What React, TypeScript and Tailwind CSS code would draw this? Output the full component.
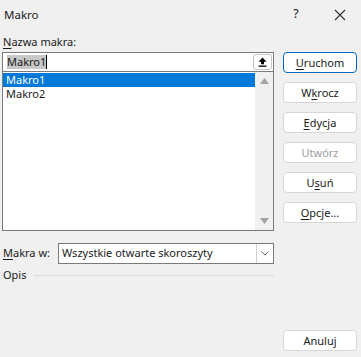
import React from "react";

const Btn = ({
  children,
  primary,
  disabled,
}: {
  children: React.ReactNode;
  primary?: boolean;
  disabled?: boolean;
}) => (
  <div
    className={
      "h-[21px] w-[74px] rounded-[4px] bg-white flex items-center justify-center text-[11px] leading-none " +
      (primary
        ? "border border-[#0067c0] text-[#1a1a1a]"
        : "border border-[#d6d6d6] " + (disabled ? "text-[#9d9d9d]" : "text-[#1a1a1a]"))
    }
  >
    {children}
  </div>
);

export default function App() {
  return (
    <div
      className="w-[361px] h-[357px] bg-[#f0f0f0] flex flex-col text-[#1a1a1a] overflow-hidden"
      style={{ fontFamily: '"Noto Sans", "Open Sans", sans-serif' }}
    >
      {/* title bar */}
      <div className="h-[29px] flex items-center pl-[4px] text-[11.5px] shrink-0">
        <span className="flex-1">Makro</span>
        <span className="w-[14px] text-center mr-[31px] text-[12.5px]">?</span>
        <svg width="12" height="12" viewBox="0 0 12 12" className="mr-[15px]">
          <path d="M1 1 L11 11 M11 1 L1 11" stroke="#333" strokeWidth="1.1" fill="none" />
        </svg>
      </div>

      <div className="flex flex-row flex-1 pl-[2px]">
        {/* left column */}
        <div className="w-[272px] flex flex-col">
          <div className="h-[23px] text-[11px] leading-[14px] pl-[1px] pt-[6px]">
            <span className="underline underline-offset-2">N</span>azwa makra:
          </div>
          <div className="h-[20px] bg-white border border-[#7a7a7a] flex items-center pl-[4px] pr-[1px]">
            <span className="text-[11px] leading-[14px] bg-[#c8c8c8]">Makro1</span>
            <span className="w-[1px] h-[14px] bg-black" />
            <div className="flex-1" />
            <div className="w-[19px] h-[16px] border border-[#c4c4c4] rounded-[3px] flex items-center justify-center">
              <svg width="9" height="10" viewBox="0 0 9 10">
                <path d="M4.5 0.5 L8.5 4.8 L6 4.8 L6 7.3 L3 7.3 L3 4.8 L0.5 4.8 Z" fill="#000" />
                <rect x="0.5" y="8.5" width="8" height="1.3" fill="#000" />
              </svg>
            </div>
          </div>
          <div className="h-[160px] bg-white border border-[#7a7a7a] -mt-[1px] flex flex-row">
            <div className="flex-1 pt-[1px] text-[11px] leading-[14px]">
              <div className="bg-[#0078d7] text-white pl-[3px] h-[14px]">Makro1</div>
              <div className="pl-[3px] h-[14px]">Makro2</div>
            </div>
            <div className="w-[18px] bg-[#f0f0f0] flex flex-col items-center justify-between py-[6px]">
              <svg width="9" height="6" viewBox="0 0 9 6">
                <path d="M0 6 L4.5 0 L9 6 Z" fill="#a3a3a3" />
              </svg>
              <svg width="9" height="6" viewBox="0 0 9 6">
                <path d="M0 0 L4.5 6 L9 0 Z" fill="#a3a3a3" />
              </svg>
            </div>
          </div>

          <div className="mt-[12px] flex flex-row items-center h-[21px]">
            <div className="w-[56px] pl-[1px] text-[11px]">
              <span className="underline underline-offset-2">M</span>akra w:
            </div>
            <div className="flex-1 h-[21px] bg-white border border-[#7a7a7a] flex items-center pl-[3px]">
              <span className="flex-1 text-[11px]">Wszystkie otwarte skoroszyty</span>
              <div className="w-[17px] h-[19px] border-l border-[#d0d0d0] flex items-center justify-center">
                <svg width="8" height="5" viewBox="0 0 8 5">
                  <path d="M0.5 0.5 L4 4 L7.5 0.5" stroke="#555" strokeWidth="0.9" fill="none" />
                </svg>
              </div>
            </div>
          </div>

          <div className="mt-[2px] flex flex-row items-center h-[18px]">
            <span className="text-[11px] pl-[1px] pr-[8px]">Opis</span>
            <div className="flex-1 h-[1px] bg-[#dcdcdc]" />
          </div>
        </div>

        {/* right column */}
        <div className="ml-[9px] flex flex-col pt-[23px]">
          <div className="flex flex-col gap-[9px]">
            <Btn primary>
              <span className="underline underline-offset-2">U</span>ruchom
            </Btn>
            <Btn>
              W<span className="underline underline-offset-2">k</span>rocz
            </Btn>
            <Btn>
              <span className="underline underline-offset-2">E</span>dycja
            </Btn>
            <Btn disabled>Utwórz</Btn>
            <Btn>
              U<span className="underline underline-offset-2">s</span>uń
            </Btn>
            <Btn>
              <span className="underline underline-offset-2">O</span>pcje...
            </Btn>
          </div>
          <div className="mt-[107px]">
            <Btn>Anuluj</Btn>
          </div>
        </div>
      </div>
    </div>
  );
}
